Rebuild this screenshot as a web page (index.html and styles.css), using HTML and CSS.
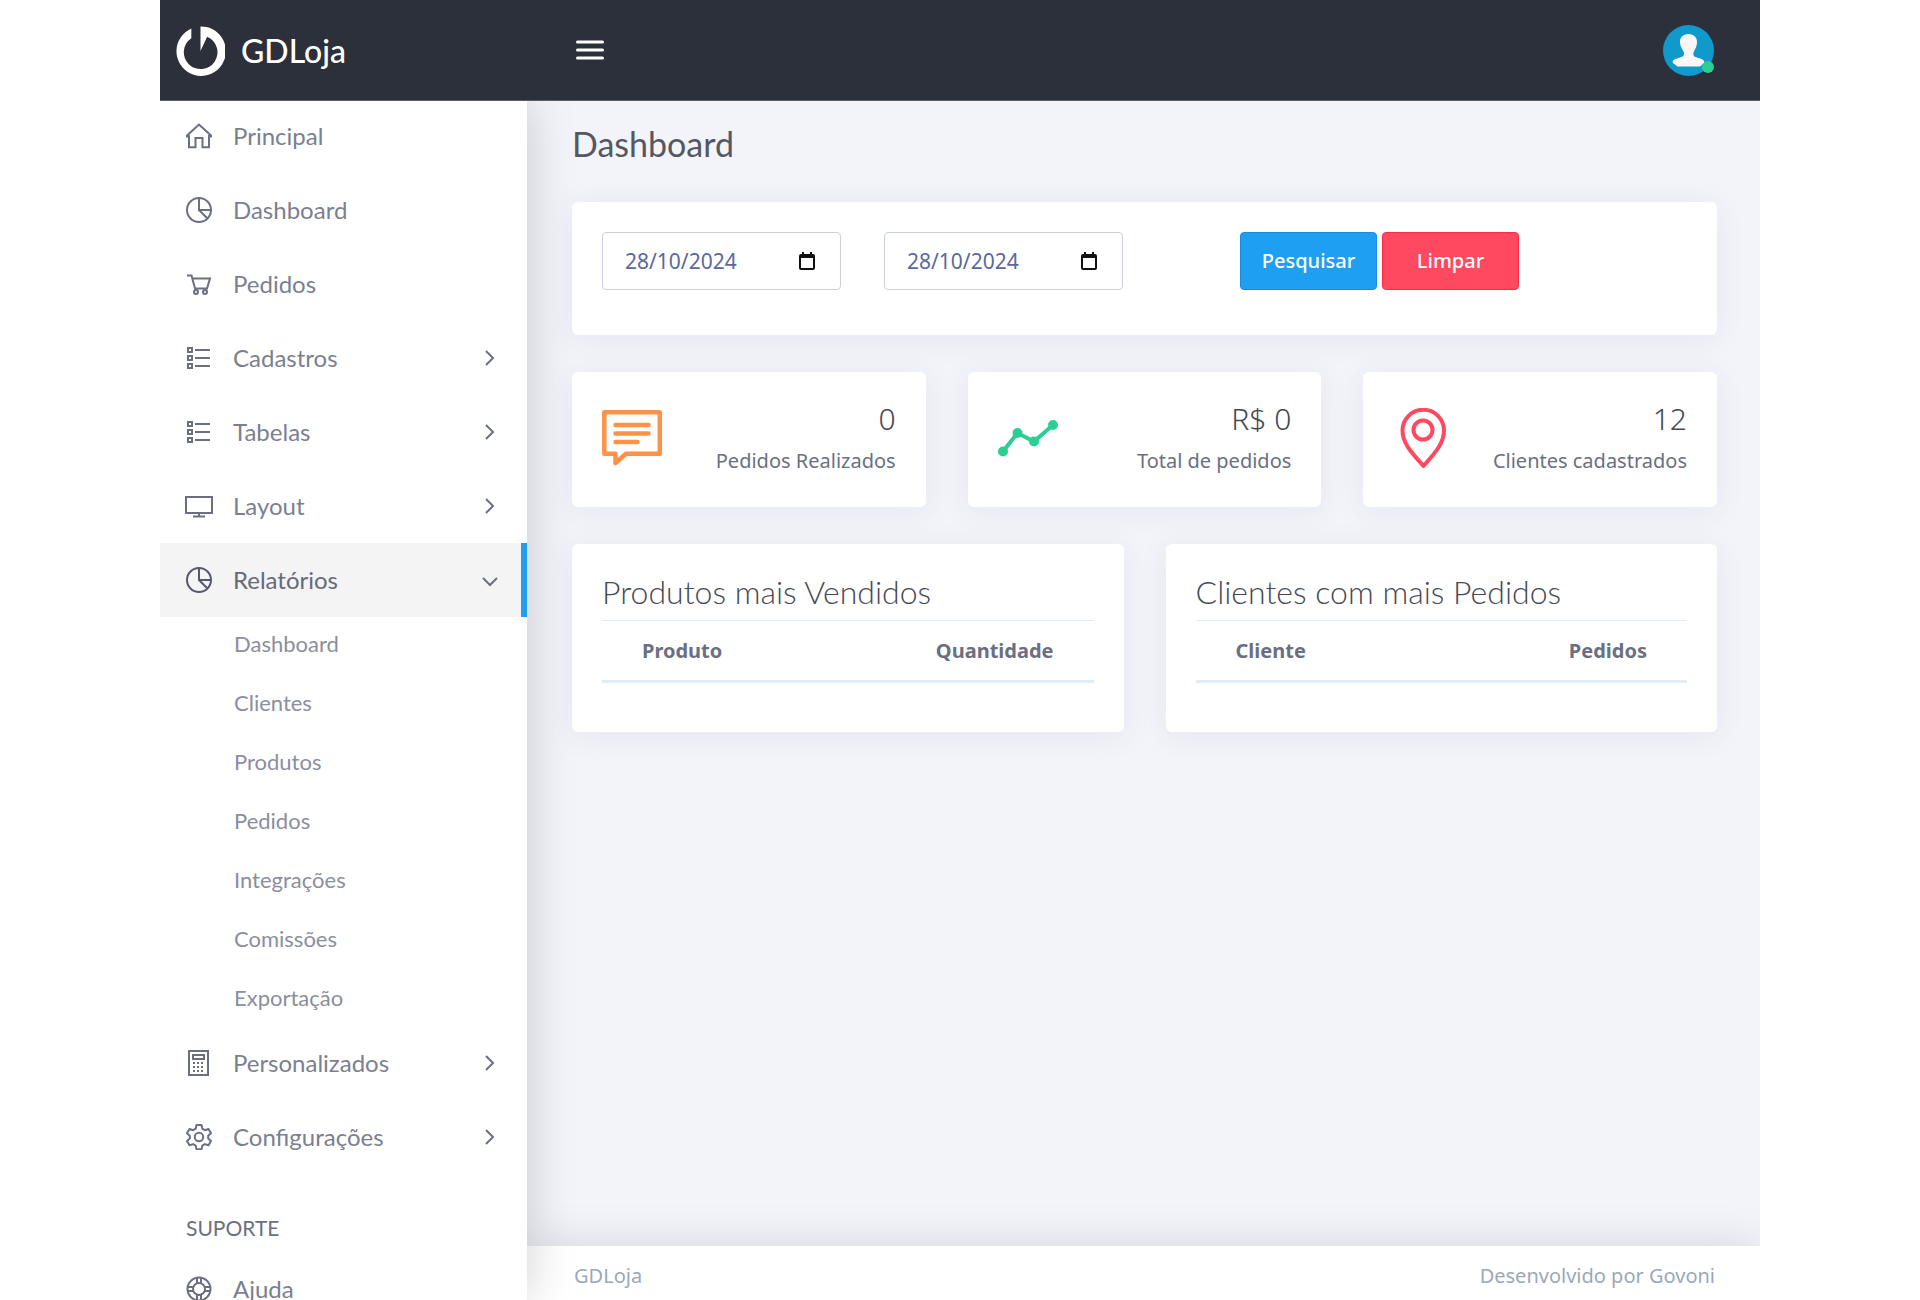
FILE: index.html
```html
<!DOCTYPE html>
<html lang="pt-BR">
<head>
<meta charset="utf-8">
<meta name="viewport" content="width=device-width, initial-scale=1">
<title>GDLoja - Dashboard</title>
<link rel="stylesheet" href="styles.css">
</head>
<body>
<svg class="sprite" aria-hidden="true">
  <symbol id="i-home" viewBox="0 0 26 26"><path d="M1 14.500V12.500L13 1.500l12 11v2M3 12v12.200h6.500V15h7v9.200H23V12" /></symbol>
  <symbol id="i-pie" viewBox="0 0 26 26"><circle cx="13" cy="13" r="12"/><path d="M13 1v12h12M13 13l8.500 8.500"/></symbol>
  <symbol id="i-cart" viewBox="0 0 26 26"><path d="M1 4.500h4.500l3.500 13h12L24 7.500H6.500"/><circle cx="10" cy="21" r="2"/><circle cx="19" cy="21" r="2"/></symbol>
  <symbol id="i-list" viewBox="0 0 26 26"><path d="M2 3h4v4H2zM2 11h4v4H2zM2 19h4v4H2zM9 5h15M9 13h15M9 21h15"/></symbol>
  <symbol id="i-screen" viewBox="0 0 28 26"><path d="M1 4h26v16H1zM14 20v3M8 23.500h12"/></symbol>
  <symbol id="i-calc" viewBox="0 0 26 26"><path d="M3 1h19v24H3zM7 5h11v4H7z"/><path stroke-dasharray="2 2" d="M7 13h12M7 17h12M7 21h12"/></symbol>
  <symbol id="i-gear" viewBox="0 0 26 26"><circle cx="13" cy="13" r="4.200"/><path stroke-linejoin="round" d="M10.500 1h5l.8 3.700 2.600 1.500 3.600-1.200 2.500 4.300-2.800 2.500v2.700l2.800 2.500-2.500 4.300-3.600-1.200-2.600 1.500-.8 3.700h-5l-.8-3.700-2.600-1.500-3.600 1.200L1 17l2.800-2.500v-2.700L1 9.300 3.500 5l3.600 1.200 2.600-1.500z"/></symbol>
  <symbol id="i-help" viewBox="0 0 26 26"><circle cx="13" cy="13" r="11.500"/><circle cx="13" cy="13" r="6"/><path d="M11 1.500v6M15 1.500v6M11 18.500v6M15 18.500v6M1.500 11h6M1.500 15h6M18.500 11h6M18.500 15h6"/></symbol>
  <symbol id="i-right" viewBox="0 0 16 16"><path d="M4 1l7 7-7 7"/></symbol>
  <symbol id="i-down" viewBox="0 0 16 16"><path d="M1 6l7 7 7-7"/></symbol>
  <symbol id="i-calendar" viewBox="0 0 16 18"><path fill="#111" fill-rule="evenodd" d="M2 2h1V0h2v2h6V0h2v2h1q2 0 2 2v12q0 2-2 2H2q-2 0-2-2V4q0-2 2-2zM2 6v10h12V6z"/></symbol>
</svg>

<div class="app">
  <header class="topbar">
    <a class="brand" href="#">
      <svg class="brand-mark" viewBox="0 0 48 49" aria-hidden="true"><path fill="#fff" d="M15 2.500V12a16.500 16.500 0 1 0 15.500-1.500L24 24.500V.5A24.200 24.200 0 1 1 15 2.500z"/></svg>
      <span>GDLoja</span>
    </a>
    <button class="menu-toggle" type="button" aria-label="Menu">
      <svg viewBox="0 0 28 20"><path stroke="#fff" stroke-width="3" stroke-linecap="round" d="M1.500 2h25M1.500 10h25M1.500 18h25"/></svg>
    </button>
    <button class="avatar" type="button" aria-label="Conta">
      <svg viewBox="0 0 51 51"><circle cx="25.500" cy="25.500" r="25.500" fill="#0f9acb"/><path fill="#faf7f6" d="M25.500 9c5.500 0 9 3.600 8.500 9-.4 4.500-2.500 7-3.500 9.500-.5 2.500 0 4 3.500 5l4.500 1.500c2.500 1 3.500 3 2.500 4L37 41.500H14.500L10 38c-1-1.500 0-3 2.500-4l4.500-1.500c3.500-1 4.500-2.500 4-5-1-2.500-3.500-5-4-9.500-.500-5.400 3-9 8.500-9z"/></svg>
      <span class="status"></span>
    </button>
  </header>

  <div class="body">
    <nav class="sidebar">
      <ul class="menu">
        <li><a class="item" href="#"><svg class="icon"><use href="#i-home"/></svg><span>Principal</span></a></li>
        <li><a class="item" href="#"><svg class="icon"><use href="#i-pie"/></svg><span>Dashboard</span></a></li>
        <li><a class="item" href="#"><svg class="icon"><use href="#i-cart"/></svg><span>Pedidos</span></a></li>
        <li><a class="item" href="#"><svg class="icon"><use href="#i-list"/></svg><span>Cadastros</span><svg class="arrow"><use href="#i-right"/></svg></a></li>
        <li><a class="item" href="#"><svg class="icon"><use href="#i-list"/></svg><span>Tabelas</span><svg class="arrow"><use href="#i-right"/></svg></a></li>
        <li><a class="item" href="#"><svg class="icon"><use href="#i-screen"/></svg><span>Layout</span><svg class="arrow"><use href="#i-right"/></svg></a></li>
        <li>
          <a class="item active" href="#"><svg class="icon"><use href="#i-pie"/></svg><span>Relatórios</span><svg class="arrow"><use href="#i-down"/></svg></a>
          <ul class="submenu">
            <li><a href="#">Dashboard</a></li>
            <li><a href="#">Clientes</a></li>
            <li><a href="#">Produtos</a></li>
            <li><a href="#">Pedidos</a></li>
            <li><a href="#">Integrações</a></li>
            <li><a href="#">Comissões</a></li>
            <li><a href="#">Exportação</a></li>
          </ul>
        </li>
        <li><a class="item" href="#"><svg class="icon"><use href="#i-calc"/></svg><span>Personalizados</span><svg class="arrow"><use href="#i-right"/></svg></a></li>
        <li><a class="item" href="#"><svg class="icon"><use href="#i-gear"/></svg><span>Configurações</span><svg class="arrow"><use href="#i-right"/></svg></a></li>
      </ul>
      <h2 class="menu-heading">SUPORTE</h2>
      <ul class="support">
        <li><a class="item" href="#"><svg class="icon"><use href="#i-help"/></svg><span>Ajuda</span></a></li>
      </ul>
    </nav>

    <div class="page">
      <main class="content">
        <h1 class="title">Dashboard</h1>

        <form class="card filter">
          <div class="date">
            <input type="text" value="28/10/2024" aria-label="Data inicial">
            <button type="button" aria-label="Abrir calendário"><svg><use href="#i-calendar"/></svg></button>
          </div>
          <div class="date">
            <input type="text" value="28/10/2024" aria-label="Data final">
            <button type="button" aria-label="Abrir calendário"><svg><use href="#i-calendar"/></svg></button>
          </div>
          <div class="actions">
            <button class="btn primary" type="button">Pesquisar</button>
            <button class="btn danger" type="button">Limpar</button>
          </div>
        </form>

        <div class="stats">
          <section class="card stat">
            <svg class="orange" viewBox="0 0 60 60"><path stroke-width="4.500" stroke-linejoin="round" d="M2.300 4.300h55.500v41.500H24L13.500 55V45.800H2.300z"/><path stroke-width="4.500" stroke-linecap="round" d="M13.500 17h33M13.500 25.500h33M13.500 34h22"/></svg>
            <div><strong>0</strong><span>Pedidos Realizados</span></div>
          </section>
          <section class="card stat">
            <svg class="green" viewBox="0 0 60 60"><path stroke-width="4" d="M5 43.500L19.500 25 36 33.500 55 17"/><g fill="#28d094" stroke="none"><circle cx="5" cy="43.500" r="5"/><circle cx="19.500" cy="25" r="5"/><circle cx="36" cy="33.500" r="5"/><circle cx="55" cy="17" r="5"/></g></svg>
            <div><strong>R$ 0</strong><span>Total de pedidos</span></div>
          </section>
          <section class="card stat">
            <svg class="red" viewBox="0 0 60 60"><path stroke-width="4" stroke-linejoin="round" d="M30.500 58C20 46 9.500 36 9.500 22.500a20.500 20.500 0 0 1 41.500 0c0 13.500-10 23.500-20.500 35.500z"/><circle cx="30" cy="22" r="9.500" stroke-width="4"/></svg>
            <div><strong>12</strong><span>Clientes cadastrados</span></div>
          </section>
        </div>

        <div class="panels">
          <section class="card panel">
            <h2>Produtos mais Vendidos</h2>
            <table><thead><tr><th>Produto</th><th>Quantidade</th></tr></thead></table>
          </section>
          <section class="card panel">
            <h2>Clientes com mais Pedidos</h2>
            <table><thead><tr><th>Cliente</th><th>Pedidos</th></tr></thead></table>
          </section>
        </div>
      </main>
      <footer class="footer"><span>GDLoja</span><span>Desenvolvido por Govoni</span></footer>
    </div>
  </div>
</div>
</body>
</html>
```
FILE: styles.css
```css
* { box-sizing: border-box; }
body {
  margin: 0;
  background: #fff;
  color: #6b6f82;
  font-family: "Noto Sans", "Open Sans", sans-serif;
  font-size: 20px;
  line-height: 30px;
}
ul { list-style: none; margin: 0; padding: 0; }
a { color: inherit; text-decoration: none; }
h1, h2 { margin: 0; }
button { border: 0; padding: 0; background: none; font: inherit; cursor: pointer; }
svg { display: block; fill: none; }
.sprite { position: absolute; width: 0; height: 0; }

.app {
  display: flex;
  flex-direction: column;
  max-width: 1600px;
  height: 100vh;
  margin: 0 auto;
  overflow: hidden;
}

.topbar {
  display: flex;
  align-items: center;
  flex: none;
  height: 101px;
  padding-right: 46px;
  background: #2c303b;
  border-bottom: 1px solid #5b5e68;
  z-index: 2;
}
.brand {
  display: flex;
  align-items: center;
  gap: 16px;
  width: 416px;
  padding: 2px 0 0 16px;
  color: #fff;
  font: 500 32px/40px Lato, sans-serif;
}
.brand-mark { width: 49px; height: 50px; }
.menu-toggle svg { width: 28px; height: 20px; }
.avatar { position: relative; margin-left: auto; }
.avatar svg { width: 51px; height: 51px; }
.status {
  position: absolute;
  right: 0;
  bottom: 3px;
  width: 12px;
  height: 12px;
  border-radius: 50%;
  background: #28d094;
}

.body { display: flex; flex: 1; min-height: 0; }

.sidebar {
  flex: none;
  width: 367px;
  background: #fff;
  box-shadow: 1px 0 45px rgba(0, 0, 0, .18);
  overflow: hidden;
  font-family: Lato, sans-serif;
  z-index: 1;
}
.menu { margin-top: -2px; }
.item {
  display: flex;
  align-items: center;
  gap: 20px;
  height: 74px;
  padding: 0 24px 0 25px;
  color: #7b7f90;
  font-size: 24px;
  line-height: 24px;
}
.item.active { background: #f4f4f4; border-right: 6px solid #1e9ff2; padding-right: 18px; color: #666a7a; }
.icon { width: 28px; height: 26px; stroke: #6b6f82; stroke-width: 2; }
.active .icon { stroke: #555a6b; }
.arrow { width: 16px; height: 16px; margin: 0 5px 0 auto; stroke: #6b6f82; stroke-width: 2; }
.submenu { margin: -3px 0 -1px; font-size: 22px; }
.submenu a { display: flex; align-items: center; height: 59px; padding-left: 74px; color: #8b8e9d; }
.menu-heading { margin-top: 38px; padding-left: 26px; font-size: 21px; font-weight: 400; line-height: 32px; }
.support { margin-top: 8px; }

.page { display: flex; flex-direction: column; flex: 1; min-width: 0; background: #f3f4fa; }
.content { flex: 1; padding: 23px 43px 36px 45px; }
.title { color: #555763; font: 400 34px/40px Lato, sans-serif; margin-bottom: 38px; }

.card {
  padding: 30px;
  border-radius: 6px;
  background: #fff;
  box-shadow: 0 4px 30px rgba(62, 57, 107, .08);
}
.filter { display: grid; grid-template-columns: repeat(12, 1fr); gap: 43px; padding-bottom: 45px; }
.date {
  grid-column: span 3;
  display: flex;
  align-items: center;
  height: 58px;
  padding: 0 25px 0 22px;
  border: 1px solid #cacfe7;
  border-radius: 4px;
}
.date input {
  flex: 1;
  min-width: 0;
  padding: 0;
  border: 0;
  background: none;
  color: #5c679e;
  font: inherit;
  font-size: 21px;
  outline: 0;
}
.date svg { width: 16px; height: 18px; }
.actions { grid-column: span 5; display: flex; justify-content: center; gap: 5px; }
.btn { width: 137px; height: 58px; border: 1px solid; border-radius: 4px; color: #fff; font-weight: 500; }
.primary { background: #1e9ff2; border-color: #148ddd; }
.danger { background: #ff4961; border-color: #ff2846; }

.stats, .panels { display: grid; gap: 42px; margin-top: 37px; }
.stats { grid-template-columns: repeat(3, 1fr); }
.panels { grid-template-columns: repeat(2, 1fr); }

.stat { display: flex; justify-content: space-between; align-items: center; height: 135px; padding: 28px 30px 31px; }
.stat svg { width: 60px; height: 60px; }
.stat div { display: flex; flex-direction: column; text-align: right; gap: 9px; }
.stat strong { color: #464855; font: 300 30px/36px "Noto Sans", sans-serif; }
.orange { stroke: #ff9149; }
.green { stroke: #28d094; }
.red { stroke: #ff4961; }

.panel { height: 188px; }
.panel h2 { color: #464855; font: 300 32px/36px Lato, sans-serif; margin-bottom: 10px; }
table { width: 100%; border-collapse: collapse; }
th { padding: 15px 40px 14px; border-top: 1px solid #e3ebf3; border-bottom: 3px solid #e3ebf3; text-align: left; font-weight: 700; }
th:last-child { text-align: right; }

.footer {
  display: flex;
  justify-content: space-between;
  flex: none;
  height: 54px;
  padding: 15px 45px 0 47px;
  background: #fff;
  box-shadow: 0 0 45px rgba(0, 0, 0, .13);
  color: #9aa9b8;
}
```
